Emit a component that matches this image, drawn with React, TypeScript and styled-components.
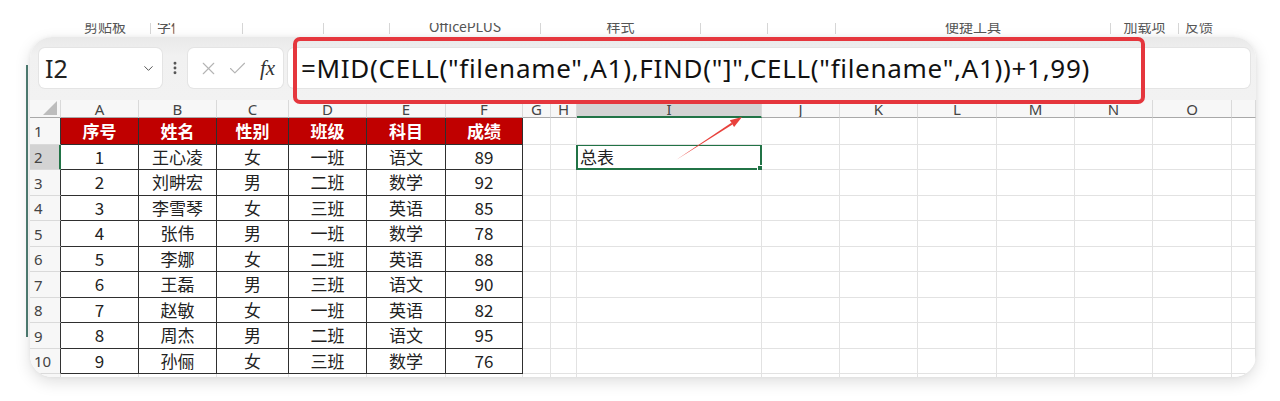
import React from "react";
import styled, { createGlobalStyle } from "styled-components";
import { X, Check, ChevronDown, EllipsisVertical } from "lucide-react";

const GlobalStyle = createGlobalStyle`
  html, body {
    margin: 0;
    padding: 0;
    background: #ffffff;
  }
  * {
    box-sizing: border-box;
  }
`;

const Page = styled.div`
  width: 1280px;
  height: 401px;
  overflow: hidden;
  background: #fff;
  font-family: "Noto Sans", "Noto Sans CJK SC", sans-serif;
`;

// ribbon group labels, cut off by the top of the screenshot
const Ribbon = styled.div`
  display: flex;
  margin-top: 23px;
  height: 14px;
  overflow: hidden;
  padding-left: 60px;
`;

const RibbonGroup = styled.div<{ $w: number; $left?: boolean }>`
  width: ${(p) => p.$w}px;
  flex: none;
  overflow: hidden;
  white-space: nowrap;
  text-align: ${(p) => (p.$left ? "left" : "center")};
  padding-left: ${(p) => (p.$left ? 6 : 0)}px;
  font-family: "Noto Sans CJK SC", sans-serif;
  font-size: 14px;
  line-height: 16px;
  margin-top: -5px;
  color: #555;
`;

const RibbonSep = styled.div`
  width: 1px;
  flex: none;
  background: #d6d6d6;
  height: 11px;
`;

const Body = styled.div`
  display: flex;
`;

const EdgeLine = styled.div`
  width: 2px;
  margin-left: 26px;
  margin-top: 28px;
  height: 272px;
  background: #4f7d73;
  flex: none;
`;

const Card = styled.div`
  position: relative;
  margin-left: 2px;
  width: 1226px;
  height: 340px;
  background: #fff;
  border-radius: 22px;
  overflow: hidden;
  box-shadow: 0 5px 16px rgba(0, 0, 0, 0.13), 0 0 4px rgba(0, 0, 0, 0.05);
`;

const FormulaBar = styled.div`
  height: 63px;
  background: linear-gradient(#e9e9e9, #f1f1f1 30%, #f2f2f2);
  display: flex;
  align-items: flex-start;
  padding: 11px 6px 0 9px;
`;

const NameBox = styled.div`
  width: 123px;
  height: 40px;
  background: #fff;
  border-radius: 6px;
  display: flex;
  align-items: center;
  justify-content: space-between;
  padding: 0 6px 0 6px;
  font-size: 25px;
  color: #222;
  box-shadow: 0 0 0 1px #e4e4e4;
`;

const Dots = styled.div`
  width: 26px;
  height: 40px;
  display: flex;
  align-items: center;
  justify-content: center;
  color: #555;
`;

const ButtonsBox = styled.div`
  width: 95px;
  height: 40px;
  background: #fff;
  border-radius: 6px;
  display: flex;
  align-items: center;
  gap: 8px;
  padding-left: 10px;
  color: #b4b4b4;
  box-shadow: 0 0 0 1px #e4e4e4;
`;

const Fx = styled.span`
  font-family: "Liberation Serif", serif;
  font-style: italic;
  font-size: 21px;
  color: #333;
  margin-left: 4px;
`;

const FormulaInput = styled.div`
  flex: 1;
  margin-left: 5px;
  height: 40px;
  background: #fff;
  border-radius: 6px;
  display: flex;
  align-items: center;
  padding-left: 13px;
  font-size: 26px;
  letter-spacing: 0.7px;
  color: #111;
  white-space: nowrap;
  box-shadow: 0 0 0 1px #e4e4e4;
`;

const Highlight = styled.div`
  position: absolute;
  left: 263px;
  top: 0;
  width: 852px;
  height: 67px;
  border: 4px solid #e5363d;
  border-radius: 7px;
  pointer-events: none;
`;

const ArrowSvg = styled.svg`
  position: absolute;
  left: 640px;
  top: 74px;
`;

const COLS = [
  { k: "A", w: 78 },
  { k: "B", w: 78 },
  { k: "C", w: 72 },
  { k: "D", w: 78 },
  { k: "E", w: 79 },
  { k: "F", w: 77 },
  { k: "G", w: 28 },
  { k: "H", w: 26 },
  { k: "I", w: 185 },
  { k: "J", w: 78 },
  { k: "K", w: 78 },
  { k: "L", w: 79 },
  { k: "M", w: 78 },
  { k: "N", w: 78 },
  { k: "O", w: 79 },
];

const template = `31px ${COLS.map((c) => c.w + "px").join(" ")} 1fr`;

const Row = styled.div<{ $h: number }>`
  display: grid;
  grid-template-columns: ${template};
  grid-template-rows: ${(p) => p.$h}px;
  height: ${(p) => p.$h}px;
  overflow: hidden;
`;

const ColHead = styled.div<{ $active?: boolean }>`
  background: ${(p) => (p.$active ? "#d3d3d3" : "#f7f7f7")};
  border-right: 1px solid #dadada;
  border-bottom: ${(p) => (p.$active ? "2px solid #217346" : "1px solid #a9a9a9")};
  font-family: "Noto Sans", sans-serif;
  font-size: 15px;
  line-height: 15px;
  padding-top: 2px;
  color: #444;
  text-align: center;
  overflow: hidden;
`;

const Corner = styled.div`
  background: #f7f7f7;
  border-right: 1px solid #dadada;
  border-bottom: 1px solid #a9a9a9;
  display: flex;
  align-items: flex-end;
  justify-content: flex-end;
  padding: 0 3px 2px 0;
`;

const Triangle = styled.div`
  width: 14px;
  height: 14px;
  background: #bdbdbd;
  clip-path: polygon(100% 0, 100% 100%, 0 100%);
`;

const RowHead = styled.div<{ $active?: boolean; $table?: boolean }>`
  background: ${(p) => (p.$active ? "#d3d3d3" : "#f7f7f7")};
  border-right: ${(p) =>
    p.$active ? "2px solid #217346" : p.$table ? "1px solid #333" : "1px solid #dadada"};
  border-bottom: 1px solid #dadada;
  font-family: "Noto Sans", sans-serif;
  font-size: 15px;
  line-height: 1.2;
  color: #444;
  display: flex;
  align-items: center;
  padding-left: 4px;
`;

const Cell = styled.div<{ $kind: "plain" | "table" | "title"; $left?: boolean }>`
  position: relative;
  border-right: 1px solid ${(p) => (p.$kind === "plain" ? "#e2e2e2" : "#2f2f2f")};
  border-bottom: 1px solid ${(p) => (p.$kind === "plain" ? "#e2e2e2" : "#2f2f2f")};
  background: ${(p) => (p.$kind === "title" ? "#c00000" : "#fff")};
  color: ${(p) => (p.$kind === "title" ? "#fff" : "#222")};
  font-weight: ${(p) => (p.$kind === "title" ? 700 : 400)};
  font-family: "Noto Sans CJK SC", sans-serif;
  font-size: 17px;
  line-height: 1.2;
  display: flex;
  align-items: center;
  justify-content: ${(p) => (p.$left ? "flex-start" : "center")};
  padding-left: ${(p) => (p.$left ? 3 : 0)}px;
  white-space: nowrap;
`;

const Selection = styled.div`
  position: absolute;
  inset: -1px -1px -1px -1px;
  border: 2px solid #217346;
  pointer-events: none;
`;

const FillHandle = styled.div`
  position: absolute;
  right: -3px;
  bottom: -3px;
  width: 6px;
  height: 6px;
  background: #217346;
  border: 1px solid #fff;
`;

const titles = ["序号", "姓名", "性别", "班级", "科目", "成绩"];

const data = [
  ["1", "王心凌", "女", "一班", "语文", "89"],
  ["2", "刘畊宏", "男", "二班", "数学", "92"],
  ["3", "李雪琴", "女", "三班", "英语", "85"],
  ["4", "张伟", "男", "一班", "数学", "78"],
  ["5", "李娜", "女", "二班", "英语", "88"],
  ["6", "王磊", "男", "三班", "语文", "90"],
  ["7", "赵敏", "女", "一班", "英语", "82"],
  ["8", "周杰", "男", "二班", "语文", "95"],
  ["9", "孙俪", "女", "三班", "数学", "76"],
  ["", "", "", "", "", ""],
];

const ribbon: { label: string; w: number; left?: boolean }[] = [
  { label: "剪贴板", w: 90 },
  { label: "字体", w: 23, left: true },
  { label: "", w: 67 },
  { label: "", w: 80 },
  { label: "", w: 65 },
  { label: "OfficePLUS", w: 150 },
  { label: "样式", w: 159 },
  { label: "", w: 66 },
  { label: "", w: 67 },
  { label: "便捷工具", w: 274 },
  { label: "加载项", w: 67 },
  { label: "反馈", w: 60, left: true },
];

// row 1 is taller, the rest alternate so that rows 2-10 fill 229px
const rowHeight = (r: number) => (r === 1 ? 27 : r % 2 === 0 ? 25 : 26);

const App = () => {
  return (
    <Page>
      <GlobalStyle />
      <Ribbon>
        {ribbon.map((g, i) => (
          <React.Fragment key={i}>
            <RibbonGroup $w={g.w} $left={g.left}>
              {g.label}
            </RibbonGroup>
            {i < ribbon.length - 1 && <RibbonSep />}
          </React.Fragment>
        ))}
      </Ribbon>
      <Body>
        <EdgeLine />
        <Card>
          <FormulaBar>
            <NameBox>
              <span>I2</span>
              <ChevronDown size={15} strokeWidth={1.6} color="#555" />
            </NameBox>
            <Dots>
              <EllipsisVertical size={16} strokeWidth={2.4} />
            </Dots>
            <ButtonsBox>
              <X size={21} strokeWidth={1.3} />
              <Check size={21} strokeWidth={1.3} />
              <Fx>fx</Fx>
            </ButtonsBox>
            <FormulaInput>
              =MID(CELL("filename",A1),FIND("]",CELL("filename",A1))+1,99)
            </FormulaInput>
          </FormulaBar>

          {/* column headers */}
          <Row $h={18}>
            <Corner>
              <Triangle />
            </Corner>
            {COLS.map((c) => (
              <ColHead key={c.k} $active={c.k === "I"}>
                {c.k}
              </ColHead>
            ))}
            <ColHead />
          </Row>

          {/* title row */}
          <Row $h={rowHeight(1)}>
            <RowHead $table>1</RowHead>
            {COLS.map((c, ci) =>
              ci < 6 ? (
                <Cell key={c.k} $kind="title">
                  {titles[ci]}
                </Cell>
              ) : (
                <Cell key={c.k} $kind="plain" />
              )
            )}
            <Cell $kind="plain" />
          </Row>

          {data.map((row, ri) => {
            const r = ri + 2;
            return (
              <Row key={r} $h={rowHeight(r)}>
                <RowHead $active={r === 2} $table={r <= 10}>
                  {r}
                </RowHead>
                {COLS.map((c, ci) => {
                  if (ci < 6 && r <= 10) {
                    return (
                      <Cell key={c.k} $kind="table">
                        {row[ci]}
                      </Cell>
                    );
                  }
                  if (c.k === "I" && r === 2) {
                    return (
                      <Cell key={c.k} $kind="plain" $left>
                        总表
                        <Selection>
                          <FillHandle />
                        </Selection>
                      </Cell>
                    );
                  }
                  return <Cell key={c.k} $kind="plain" />;
                })}
                <Cell $kind="plain" />
              </Row>
            );
          })}

          <Highlight />
          <ArrowSvg width="80" height="56" viewBox="0 0 80 56">
            <polygon points="6,49 62.5,13.4 61.4,11.7" fill="#e8413c" />
            <polygon points="72,6 64.1,15.9 59.8,9.2" fill="#e8413c" />
          </ArrowSvg>
        </Card>
      </Body>
    </Page>
  );
};

export default App;
